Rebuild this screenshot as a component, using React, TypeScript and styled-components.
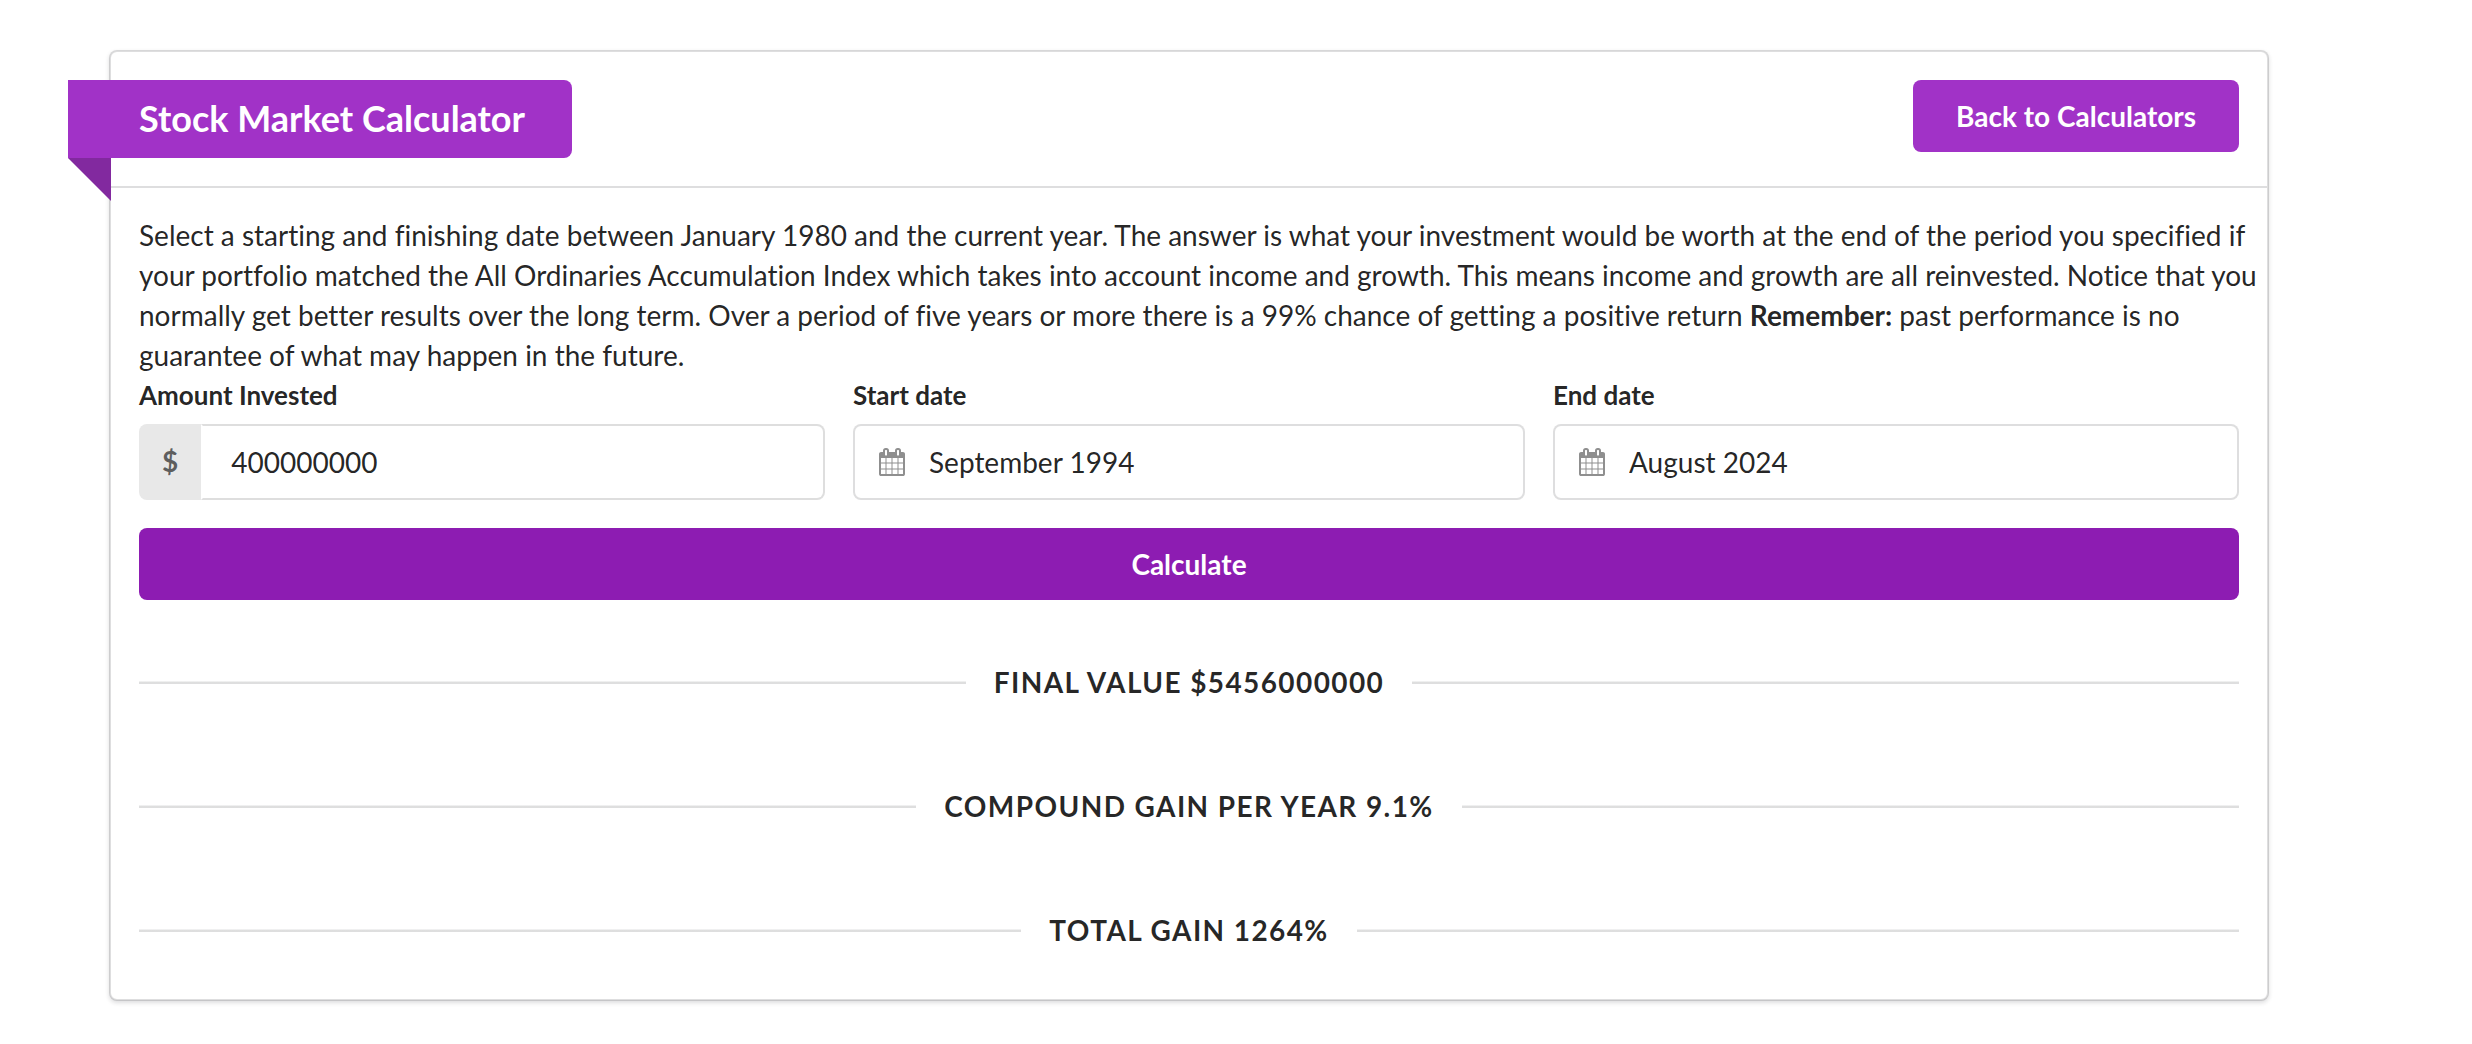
import React, { useState } from "react";
import styled, { createGlobalStyle } from "styled-components";

const ink = "rgba(0, 0, 0, 0.87)";
const line = "rgba(34, 36, 38, 0.15)";

const GlobalStyle = createGlobalStyle`
  *, *::before, *::after { box-sizing: border-box; }
  body {
    margin: 0;
    background: #fff;
    color: ${ink};
    font-family: Lato, "Liberation Sans", sans-serif;
    font-size: 28px;
    line-height: 40px;
    font-variant-ligatures: none;
    -webkit-font-smoothing: antialiased;
  }
`;

const Page = styled.main`
  padding: 50px 203px 43px 109px;
`;

const Card = styled.section`
  border: 2px solid ${line};
  border-radius: 8px;
  background: #fff;
  background-clip: padding-box;
  box-shadow: 0 2px 4px 0 ${line};
`;

const CardHeader = styled.header`
  display: flex;
  align-items: flex-start;
  justify-content: space-between;
  padding: 28px;
  border-bottom: 2px solid ${line};
`;

const Ribbon = styled.h1`
  position: relative;
  margin: 0 0 0 -71px;
  padding: 20px 47px 22px 71px;
  border-radius: 0 8px 8px 0;
  background: #a132c7;
  color: #fff;
  font-size: 36px;
  font-weight: 700;
  line-height: 36px;

  &::after {
    content: "";
    position: absolute;
    top: 100%;
    left: 0;
    border-style: solid;
    border-width: 0 43px 43px 0;
    border-color: transparent #82299f transparent transparent;
  }
`;

const Button = styled.button<{ $block?: boolean }>`
  display: block;
  width: ${(p) => (p.$block ? "100%" : "auto")};
  padding: 22px 43px;
  border: 0;
  border-radius: 8px;
  background: ${(p) => (p.$block ? "#8d1cb2" : "#a132c7")};
  color: #fff;
  font: inherit;
  font-weight: 700;
  line-height: 28px;
  cursor: pointer;
`;

const CardBody = styled.div`
  padding: 27px 28px 28px;
`;

const Intro = styled.p`
  margin: 0 -24px 0 0;
`;

const Fields = styled.div`
  display: flex;
  margin-bottom: 28px;
`;

const Field = styled.div`
  flex: none;
  width: calc(100% / 3);
  padding: 0 14px;

  &:first-child { padding-left: 0; }
  &:last-child { padding-right: 0; }
`;

const FieldLabel = styled.label`
  display: block;
  margin-bottom: 9px;
  font-size: 26px;
  font-weight: 700;
`;

const InputBox = styled.div`
  display: flex;
  position: relative;
`;

const Prefix = styled.span`
  padding: 21px 23px 23px;
  border-radius: 8px 0 0 8px;
  background: #e8e8e8;
  color: rgba(0, 0, 0, 0.6);
  font-weight: 700;
  line-height: 32px;
`;

const TextInput = styled.input<{ $kind: "prefixed" | "icon" }>`
  flex: 1;
  min-width: 0;
  height: 76px;
  padding: 0 28px 0 ${(p) => (p.$kind === "icon" ? "74px" : "28px")};
  border: 2px solid ${line};
  border-left-color: ${(p) => (p.$kind === "icon" ? line : "transparent")};
  border-radius: ${(p) => (p.$kind === "icon" ? "8px" : "0 8px 8px 0")};
  outline: 0;
  background: #fff;
  color: ${ink};
  font: inherit;
`;

const IconSlot = styled.span`
  position: absolute;
  inset: 0 auto 0 26px;
  display: flex;
  align-items: center;
  color: ${ink};
  opacity: 0.5;
  pointer-events: none;
`;

const Results = styled.div`
  display: flex;
  flex-direction: column;
  gap: 84px;
  padding: 62px 0 21px;
`;

const Result = styled.h2`
  display: flex;
  align-items: center;
  gap: 28px;
  margin: 0;
  color: rgba(0, 0, 0, 0.85);
  font-size: 28px;
  font-weight: 700;
  letter-spacing: 0.05em;
  text-transform: uppercase;

  &::before,
  &::after {
    content: "";
    flex: 1;
    height: 3px;
    background: linear-gradient(rgba(34, 36, 38, 0.07) 1px, ${line} 1px);
  }
`;

const CalendarIcon = () => (
  <svg width="26" height="28" viewBox="0 0 1664 1792" fill="currentColor" aria-hidden="true">
    <path d="M128 1664h288v-288h-288v288zm352 0h320v-288h-320v288zm-352-352h288v-320h-288v320zm352 0h320v-320h-320v320zm-352-384h288v-288h-288v288zm736 736h320v-288h-320v288zm-384-736h320v-288h-320v288zm768 736h288v-288h-288v288zm-384-352h320v-320h-320v320zm-352-864v-288q0-13-9.500-22.500t-22.500-9.500h-64q-13 0-22.500 9.500t-9.500 22.500v288q0 13 9.500 22.500t22.500 9.500h64q13 0 22.500-9.500t9.500-22.500zm736 864h288v-320h-288v320zm-384-384h320v-288h-320v288zm384 0h288v-288h-288v288zm32-480v-288q0-13-9.500-22.500t-22.500-9.500h-64q-13 0-22.500 9.500t-9.500 22.500v288q0 13 9.500 22.500t22.500 9.500h64q13 0 22.500-9.500t9.500-22.500zm384-64v1280q0 52-38 90t-90 38h-1408q-52 0-90-38t-38-90v-1280q0-52 38-90t90-38h128v-96q0-66 47-113t113-47h64q66 0 113 47t47 113v96h384v-96q0-66 47-113t113-47h64q66 0 113 47t47 113v96h128q52 0 90 38t38 90z" />
  </svg>
);

type DateFieldProps = { id: string; label: string; initial: string };

const DateField = ({ id, label, initial }: DateFieldProps) => {
  const [value, setValue] = useState(initial);
  return (
    <Field>
      <FieldLabel htmlFor={id}>{label}</FieldLabel>
      <InputBox>
        <TextInput id={id} $kind="icon" value={value} onChange={(e) => setValue(e.target.value)} />
        <IconSlot>
          <CalendarIcon />
        </IconSlot>
      </InputBox>
    </Field>
  );
};

const results = ["Final value $5456000000", "Compound gain per year 9.1%", "Total gain 1264%"];

export default function App() {
  const [amount, setAmount] = useState("400000000");
  return (
    <>
      <GlobalStyle />
      <Page>
        <Card>
          <CardHeader>
            <Ribbon>Stock Market Calculator</Ribbon>
            <Button type="button">Back to Calculators</Button>
          </CardHeader>
          <CardBody>
            <Intro>
              Select a starting and finishing date between January 1980 and the current year. The answer is what your
              investment would be worth at the end of the period you specified if your portfolio matched the All
              Ordinaries Accumulation Index which takes into account income and growth. This means income and growth
              are all reinvested. Notice that you normally get better results over the long term. Over a period of five
              years or more there is a 99% chance of getting a positive return <strong>Remember:</strong> past
              performance is no guarantee of what may happen in the future.
            </Intro>
            <form onSubmit={(e) => e.preventDefault()}>
              <Fields>
                <Field>
                  <FieldLabel htmlFor="amount">Amount Invested</FieldLabel>
                  <InputBox>
                    <Prefix>$</Prefix>
                    <TextInput
                      id="amount"
                      $kind="prefixed"
                      inputMode="numeric"
                      value={amount}
                      onChange={(e) => setAmount(e.target.value)}
                    />
                  </InputBox>
                </Field>
                <DateField id="start" label="Start date" initial="September 1994" />
                <DateField id="end" label="End date" initial="August 2024" />
              </Fields>
              <Button type="submit" $block>
                Calculate
              </Button>
            </form>
            <Results>
              {results.map((text) => (
                <Result key={text}>{text}</Result>
              ))}
            </Results>
          </CardBody>
        </Card>
      </Page>
    </>
  );
}
